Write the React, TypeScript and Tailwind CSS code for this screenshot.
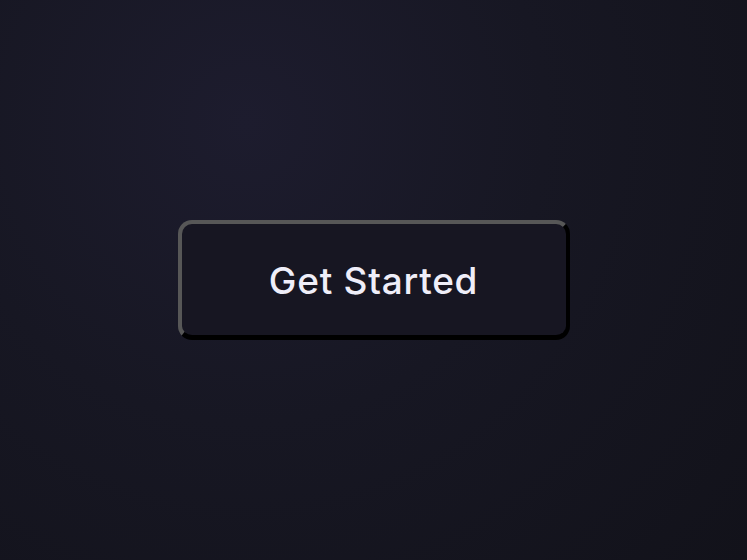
export default function App() {
  return (
    <div className="flex h-[560px] w-[747px] items-center justify-center bg-[radial-gradient(circle_at_33%_22%,#1d1c2e_0%,#171723_45%,#12121a_100%)] font-['Inter',sans-serif]">
      <button className="flex h-[120px] w-[392px] items-center justify-center rounded-[14px] border-t-[4px] border-l-[4px] border-r-[4px] border-b-[5px] border-t-[#575757] border-l-[#575757] border-r-black border-b-black bg-[#171622] pt-[2px] text-[37px] font-medium tracking-[0.02em] text-[#efeef9]">
        Get Started
      </button>
    </div>
  );
}
